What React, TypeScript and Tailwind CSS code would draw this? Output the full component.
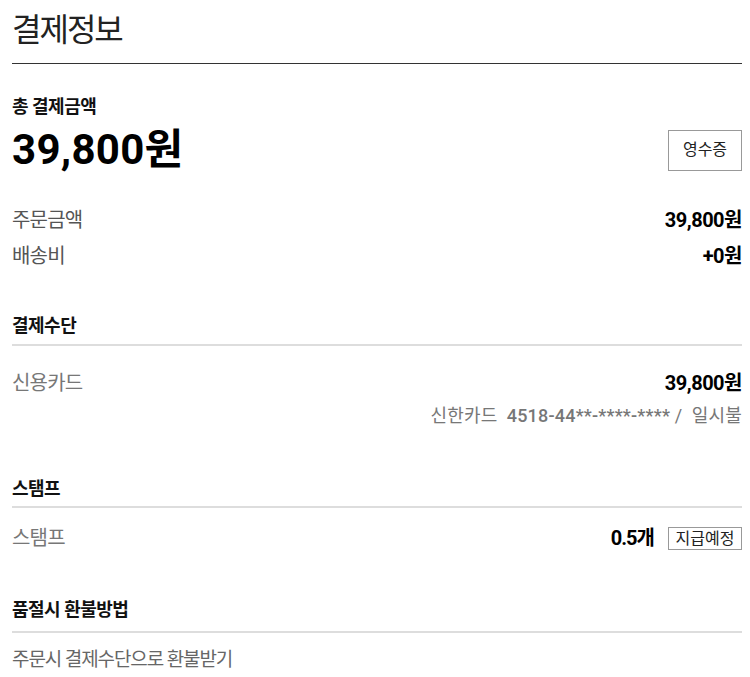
export default function App() {
  return (
    <div className="bg-white w-[750px] h-[677px] overflow-hidden pl-3 pr-2 text-[#111] font-['Roboto','Noto_Sans_CJK_KR',sans-serif]">
      <h1 className="pt-[8px] pb-[11px] text-[32px] leading-[44px] tracking-[-2px] font-normal text-[#222] border-b border-[#333]">결제정보</h1>

      <section className="pt-[31px]">
        <h2 className="text-[18px] leading-[24px] font-bold tracking-[-0.5px]">총 결제금액</h2>
        <div className="flex items-center justify-between mt-[7px] h-[48px]">
          <span className="text-[42px] leading-[48px] font-bold text-black tracking-[0.3px]">39,800원</span>
          <button className="w-[74px] h-[41px] border border-[#999] text-[16px] text-[#222] bg-white">영수증</button>
        </div>
        <div className="mt-[31px] flex flex-col gap-[6px]">
          <div className="flex justify-between items-center text-[20px] leading-[30px]">
            <span className="text-[#555] tracking-[-0.8px]">주문금액</span>
            <span className="font-bold tracking-[-0.5px] text-black">39,800원</span>
          </div>
          <div className="flex justify-between items-center text-[20px] leading-[30px]">
            <span className="text-[#555] tracking-[-0.8px]">배송비</span>
            <span className="font-bold tracking-[-0.5px] text-black">+0원</span>
          </div>
        </div>
      </section>

      <section className="mt-[43px]">
        <h2 className="text-[18px] leading-[24px] font-bold tracking-[-0.5px] pb-[6px] border-b-2 border-[#ddd]">결제수단</h2>
        <div className="flex justify-between items-center text-[20px] leading-[30px] mt-[22px]">
          <span className="text-[#777] tracking-[-0.8px]">신용카드</span>
          <span className="font-bold tracking-[-0.5px] text-black">39,800원</span>
        </div>
        <div className="text-right text-[18px] leading-[26px] text-[#777] mt-[5px] tracking-[0.2px]">신한카드&nbsp; <span className="font-medium">4518-44**-****-****</span> /&nbsp; 일시불</div>
      </section>

      <section className="mt-[48px]">
        <h2 className="text-[18px] leading-[24px] font-bold tracking-[-0.5px] pb-[5px] border-b-2 border-[#ddd]">스탬프</h2>
        <div className="flex justify-between items-center mt-[17px] h-[26px]">
          <span className="text-[20px] leading-[26px] text-[#777] tracking-[-0.8px]">스탬프</span>
          <div className="flex items-center gap-[14px]">
            <span className="text-[20px] font-bold tracking-[-1px] text-black">0.5개</span>
            <span className="w-[74px] h-[23px] border border-[#999] text-[16px] leading-[21px] text-center text-[#222]">지급예정</span>
          </div>
        </div>
      </section>

      <section className="mt-[47px]">
        <h2 className="text-[18px] leading-[24px] font-bold tracking-[-0.5px] pb-[9px] border-b-2 border-[#ddd]">품절시 환불방법</h2>
        <div className="text-[19px] leading-[30px] text-[#666] tracking-[-1.1px] mt-[12px]">주문시 결제수단으로 환불받기</div>
      </section>
    </div>
  );
}
